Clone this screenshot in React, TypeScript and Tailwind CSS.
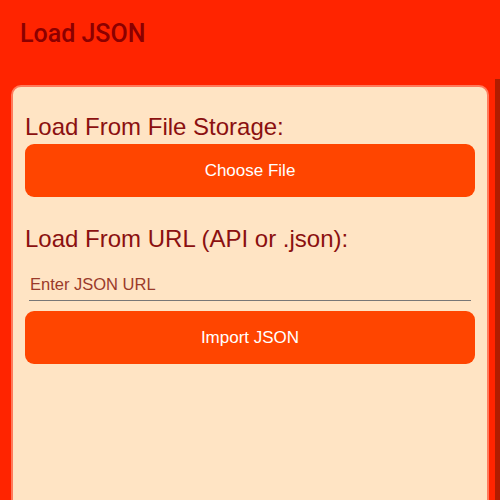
export default function App() {
  return (
    <div className="w-[500px] h-[500px] overflow-hidden bg-[#ff2400] flex flex-col font-['Liberation_Sans',Arial,sans-serif]">
      <header className="h-[79px] shrink-0 flex items-center pl-5 pb-[13px]">
        <h1 className="text-[25px] font-medium text-[#8b0000] font-['Roboto',sans-serif] leading-none">Load JSON</h1>
      </header>
      <div className="flex flex-1 min-h-0">
        <main className="flex-1 pl-[11px] pr-[6px] pt-[6px]">
          <section className="h-[600px] bg-[#ffe4c4] border-2 border-[#ff7a5c] rounded-[10px] px-[12px] pt-[26px]">
            <h2 className="text-[24px] leading-[28px] text-[#8b1010]">Load From File Storage:</h2>
            <button className="mt-[3px] w-full h-[53px] bg-[#ff4500] rounded-[9px] text-white text-[17px]">
              Choose File
            </button>
            <h2 className="mt-[28px] text-[24px] leading-[28px] text-[#8b1010]">Load From URL (API or .json):</h2>
            <input
              placeholder="Enter JSON URL"
              className="mt-[16px] mx-[4px] w-[442px] h-[32px] px-[1px] bg-transparent border-b border-[#777] text-[16.5px] outline-none placeholder:text-[#9a3a2a]"
            />
            <button className="mt-[10px] w-full h-[53px] bg-[#ff4500] rounded-[9px] text-white text-[17px]">
              Import JSON
            </button>
          </section>
        </main>
        <div className="w-[5px] shrink-0 bg-[#b01c00]" />
      </div>
    </div>
  );
}
